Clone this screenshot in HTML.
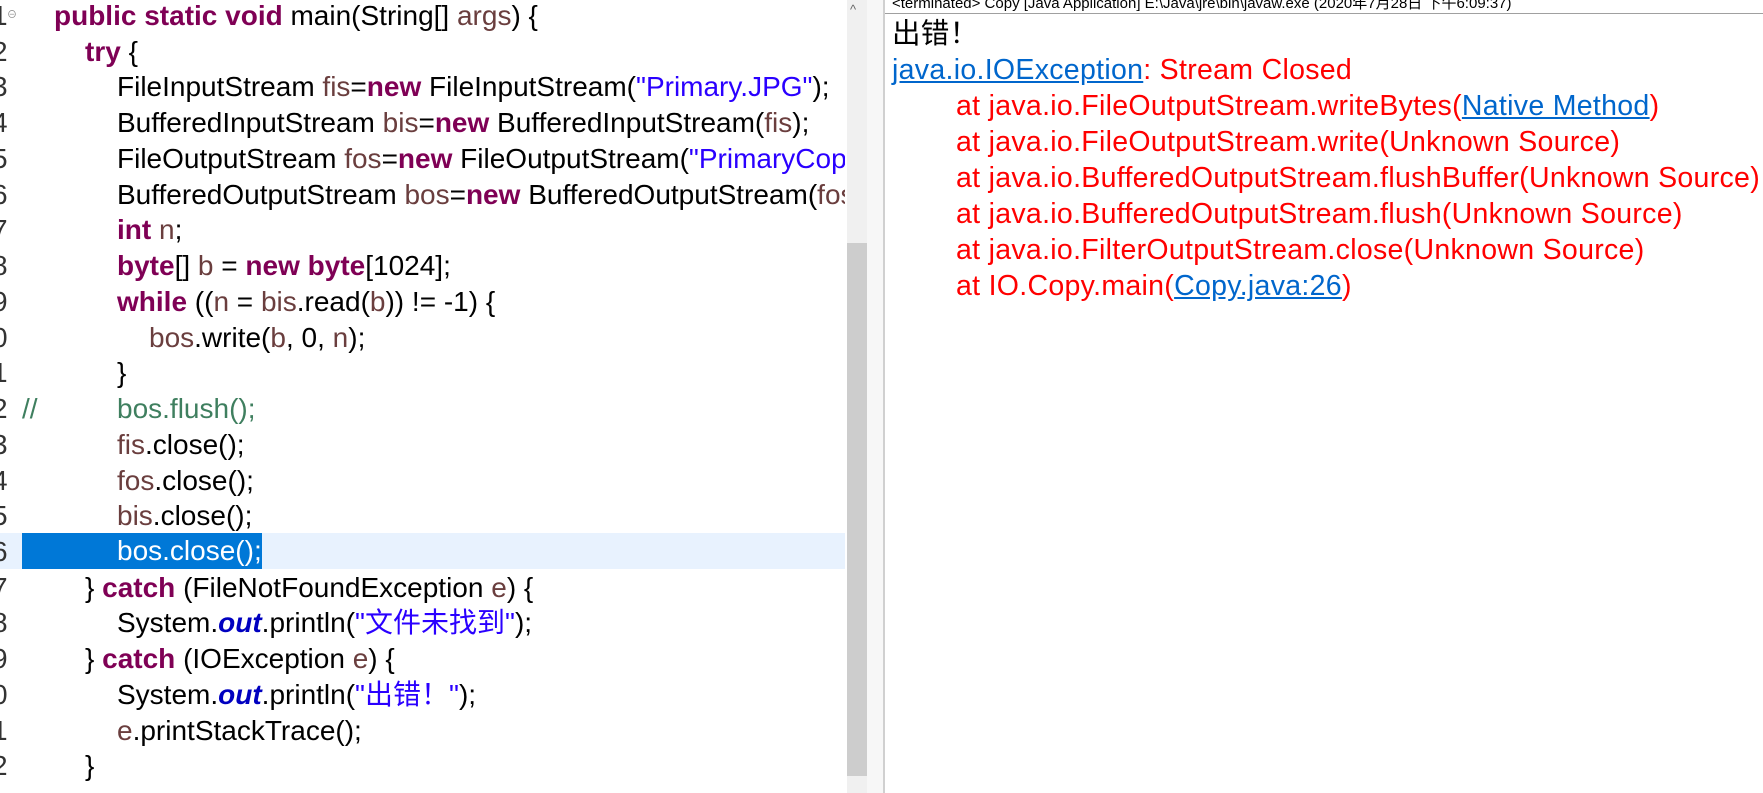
<!DOCTYPE html>
<html><head><meta charset="utf-8">
<style>
html,body{margin:0;padding:0;background:#fff;width:1763px;height:793px;overflow:hidden;position:relative;
font-family:"Liberation Sans","Noto Sans CJK SC",sans-serif;}
.l{position:absolute;left:0;height:36px;line-height:36px;font-size:28px;color:#000;white-space:pre;}
.k{color:#7f0055;font-weight:bold}
.v{color:#6a3e3e}
.s{color:#2a00ff}
.c{color:#3f7f5f}
.o{color:#0000c0;font-weight:bold;font-style:italic}
.n{position:absolute;left:-8px;height:36px;line-height:36px;font-size:28px;color:#333;}
.cl{position:absolute;left:892px;height:36px;line-height:36px;font-size:28.5px;letter-spacing:0.3px;color:#ff0000;white-space:pre;}
.a{color:#0066cc;text-decoration:underline}
</style></head><body>
<div style="position:absolute;left:0;top:0;width:845px;height:793px;overflow:hidden">
<div style="position:absolute;left:0;top:533px;width:845px;height:36px;background:#e8f2fe"></div>

<div class="n" style="top:-2px">1</div><div style="position:absolute;left:7px;top:6px;font-size:10px;color:#888">⊖</div>
<div class="n" style="top:34px">2</div><div class="n" style="top:69px">3</div><div class="n" style="top:105px">4</div>
<div class="n" style="top:141px">5</div><div class="n" style="top:177px">6</div><div class="n" style="top:212px">7</div>
<div class="n" style="top:248px">8</div><div class="n" style="top:284px">9</div><div class="n" style="top:320px">0</div>
<div class="n" style="top:355px">1</div><div class="n" style="top:391px">2</div><div class="n" style="top:427px">3</div>
<div class="n" style="top:463px">4</div><div class="n" style="top:498px">5</div><div class="n" style="top:534px">6</div>
<div class="n" style="top:570px">7</div><div class="n" style="top:605px">8</div><div class="n" style="top:641px">9</div>
<div class="n" style="top:677px">0</div><div class="n" style="top:713px">1</div><div class="n" style="top:748px">2</div>

<div class="l" style="top:-2px;left:54px"><span class="k">public static void</span> main(String[] <span class="v">args</span>) {</div>
<div class="l" style="top:34px;left:85px"><span class="k">try</span> {</div>
<div class="l" style="top:69px;left:117px">FileInputStream <span class="v">fis</span>=<span class="k">new</span> FileInputStream(<span class="s">"Primary.JPG"</span>);</div>
<div class="l" style="top:105px;left:117px">BufferedInputStream <span class="v">bis</span>=<span class="k">new</span> BufferedInputStream(<span class="v">fis</span>);</div>
<div class="l" style="top:141px;left:117px">FileOutputStream <span class="v">fos</span>=<span class="k">new</span> FileOutputStream(<span class="s">"PrimaryCopy.JPG"</span>);</div>
<div class="l" style="top:177px;left:117px">BufferedOutputStream <span class="v">bos</span>=<span class="k">new</span> BufferedOutputStream(<span class="v">fos</span>);</div>
<div class="l" style="top:212px;left:117px"><span class="k">int</span> <span class="v">n</span>;</div>
<div class="l" style="top:248px;left:117px"><span class="k">byte</span>[] <span class="v">b</span> = <span class="k">new byte</span>[1024];</div>
<div class="l" style="top:284px;left:117px"><span class="k">while</span> ((<span class="v">n</span> = <span class="v">bis</span>.read(<span class="v">b</span>)) != -1) {</div>
<div class="l" style="top:320px;left:149px"><span class="v">bos</span>.write(<span class="v">b</span>, 0, <span class="v">n</span>);</div>
<div class="l" style="top:355px;left:117px">}</div>
<div class="l c" style="top:391px;left:22px">//</div>
<div class="l c" style="top:391px;left:117px">bos.flush();</div>
<div class="l" style="top:427px;left:117px"><span class="v">fis</span>.close();</div>
<div class="l" style="top:463px;left:117px"><span class="v">fos</span>.close();</div>
<div class="l" style="top:498px;left:117px"><span class="v">bis</span>.close();</div>
<div class="l" style="top:533px;left:22px;color:#fff"><span style="display:inline-block;background:#0078d7;padding-left:95px;height:36px">bos.close();</span></div>
<div class="l" style="top:570px;left:85px">} <span class="k">catch</span> (FileNotFoundException <span class="v">e</span>) {</div>
<div class="l" style="top:605px;left:117px">System.<span class="o">out</span>.println(<span class="s">"文件未找到"</span>);</div>
<div class="l" style="top:641px;left:85px">} <span class="k">catch</span> (IOException <span class="v">e</span>) {</div>
<div class="l" style="top:677px;left:117px">System.<span class="o">out</span>.println(<span class="s">"出错！"</span>);</div>
<div class="l" style="top:713px;left:117px"><span class="v">e</span>.printStackTrace();</div>
<div class="l" style="top:748px;left:85px">}</div>
</div>

<div style="position:absolute;left:847px;top:0;width:20px;height:793px;background:#f0f0f0"></div>
<div style="position:absolute;left:850px;top:2px;font-size:13px;color:#666">^</div>
<div style="position:absolute;left:847px;top:243px;width:20px;height:533px;background:#cdcdcd"></div>
<div style="position:absolute;left:867px;top:0;width:16px;height:793px;background:#f7f7f7"></div>
<div style="position:absolute;left:883px;top:0;width:2px;height:793px;background:#d0d0d0"></div>

<div style="position:absolute;left:892px;top:-4px;font-size:15px;color:#000;white-space:pre;line-height:16px">&lt;terminated&gt; Copy [Java Application] E:\Java\jre\bin\javaw.exe (2020年7月28日 下午6:09:37)</div>
<div style="position:absolute;left:885px;top:13px;width:878px;height:1px;background:#a0a0a0"></div>

<div class="cl" style="top:16px;color:#000">出错！</div>
<div class="cl" style="top:52px"><span class="a">java.io.IOException</span>: Stream Closed</div>
<div class="cl" style="top:88px;left:956px">at java.io.FileOutputStream.writeBytes(<span class="a">Native Method</span>)</div>
<div class="cl" style="top:124px;left:956px">at java.io.FileOutputStream.write(Unknown Source)</div>
<div class="cl" style="top:160px;left:956px">at java.io.BufferedOutputStream.flushBuffer(Unknown Source)</div>
<div class="cl" style="top:196px;left:956px">at java.io.BufferedOutputStream.flush(Unknown Source)</div>
<div class="cl" style="top:232px;left:956px">at java.io.FilterOutputStream.close(Unknown Source)</div>
<div class="cl" style="top:268px;left:956px">at IO.Copy.main(<span class="a">Copy.java:26</span>)</div>
</body></html>
